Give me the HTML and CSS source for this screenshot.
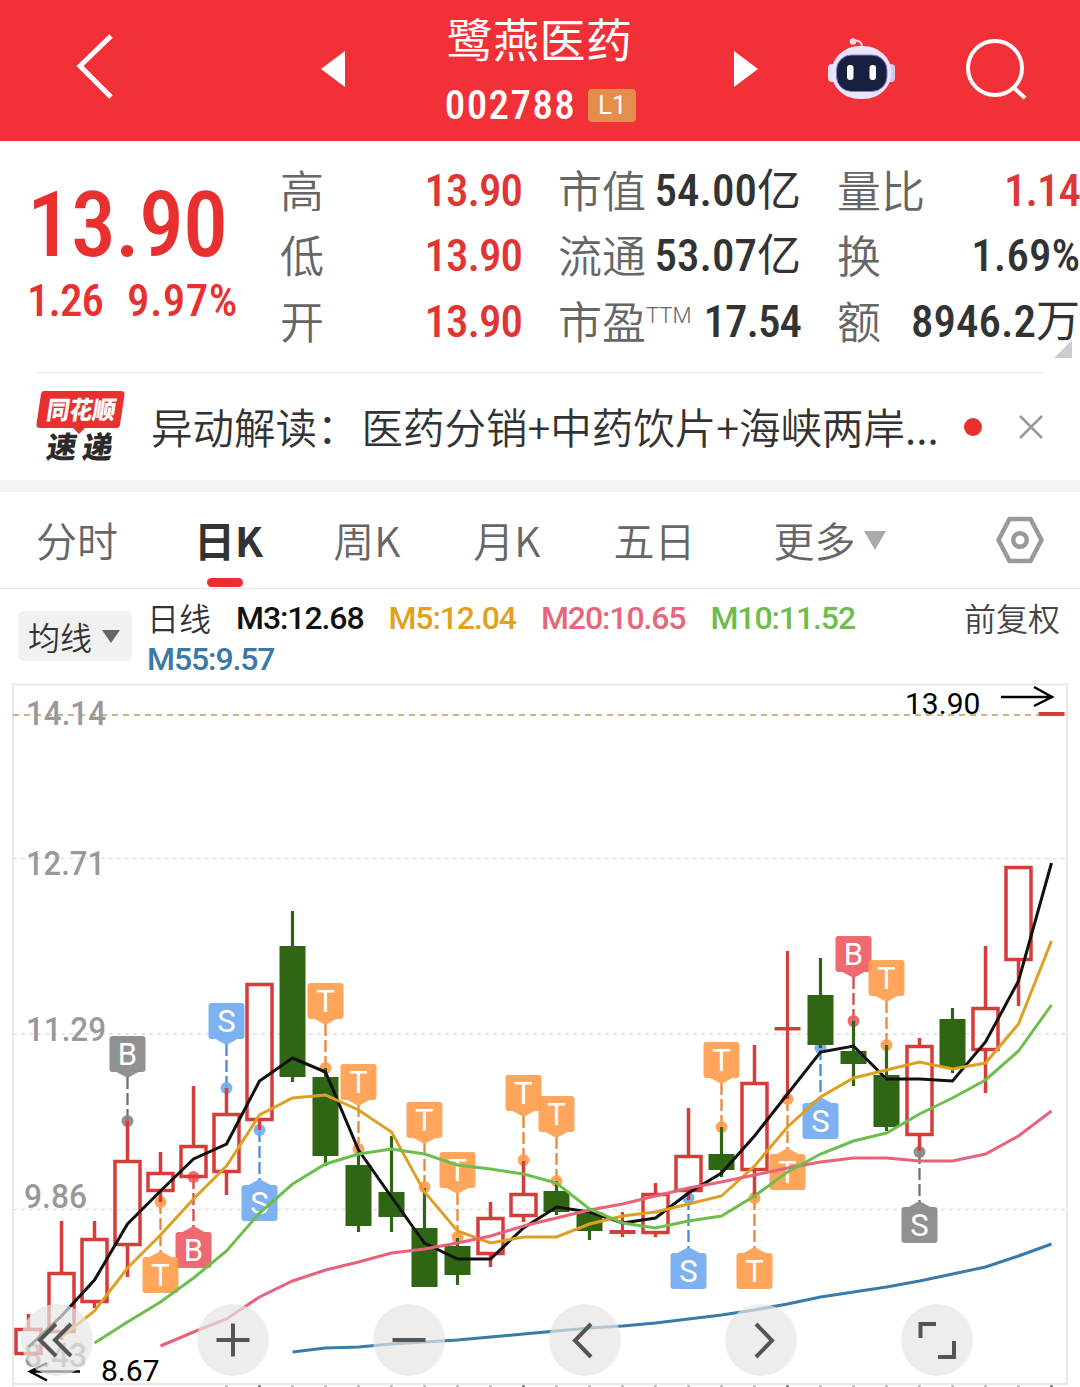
FILE: index.html
```
<!DOCTYPE html>
<html lang="zh-CN">
<head>
    <meta charset="UTF-8">
    <meta name="viewport" content="width=device-width, initial-scale=1.0">
    <title>鹭燕医药 002788</title>
    <link rel="stylesheet" href="styles.css">
</head>
<body>
    <header>
        <svg class="back" width="42" height="70" viewBox="0 0 42 70"><path d="M37 5 6 35l31 31" fill="none" stroke="#fff" stroke-width="5"/></svg>
        <svg class="prev" width="24" height="36" viewBox="0 0 24 36"><path d="M24 0v36L0 18z" fill="#fff"/></svg>
        <div class="title">
            <h1>鹭燕医药</h1>
            <div class="code"><span class="num">002788</span><span class="level">L1</span></div>
        </div>
        <svg class="next" width="24" height="36" viewBox="0 0 24 36"><path d="M0 0v36l24-18z" fill="#fff"/></svg>
        <svg class="robot" width="68" height="64" viewBox="0 0 68 64">
            <path d="M25 5c5-3 9 0 9 5" fill="none" stroke="#f3dcec" stroke-width="2"/>
            <circle cx="25" cy="4.500" r="3.300" fill="#f5d5e0"/>
            <rect x="0" y="27" width="8" height="18" rx="4" fill="#e4dff8"/>
            <rect x="59" y="27" width="8" height="18" rx="4" fill="#cfc8f2"/>
            <rect x="3.500" y="9" width="60" height="53" rx="28" fill="#e9e5f8"/>
            <rect x="8.500" y="18" width="50.500" height="36.500" rx="15" fill="#18203f" stroke="#8d72dd"/>
            <rect x="19" y="28" width="6.500" height="15" rx="3" fill="#fff"/>
            <rect x="41.500" y="28" width="6.500" height="15" rx="3" fill="#fff"/>
        </svg>
        <svg class="search" width="62" height="62" viewBox="0 0 62 62"><g fill="none" stroke="#fff" stroke-width="4"><circle cx="29" cy="30" r="27"/><path d="m47 49 12 11"/></g></svg>
    </header>

    <section class="quote">
        <div class="price">
            <div class="last num">13.90</div>
            <div class="change num"><span>1.26</span><span class="percent">9.97%</span></div>
        </div>
        <div class="stats">
            <div class="stat"><span>高</span><b class="red"><i class="num">13.90</i></b></div>
            <div class="stat"><span>市值</span><b><i class="num">54.00</i>亿</b></div>
            <div class="stat"><span>量比</span><b class="red"><i class="num">1.14</i></b></div>
            <div class="stat"><span>低</span><b class="red"><i class="num">13.90</i></b></div>
            <div class="stat"><span>流通</span><b><i class="num">53.07</i>亿</b></div>
            <div class="stat"><span>换</span><b><i class="num">1.69%</i></b></div>
            <div class="stat"><span>开</span><b class="red"><i class="num">13.90</i></b></div>
            <div class="stat"><span>市盈<sup>TTM</sup></span><b class="pe"><i class="num">17.54</i></b></div>
            <div class="stat"><span>额</span><b><i class="num">8946.2</i>万</b></div>
        </div>
        <div class="corner"></div>
    </section>

    <section class="news">
        <svg class="news-logo" width="90" height="80" viewBox="0 -3 90 80">
            <path d="M8 1h77q4 0 3.500 4l-4.500 30q-.5 3-4 3H49l-6 6-6-6H4q-4 0-3.500-4L5 4q.5-3 3-3z" fill="#e83030"/>
            <g transform="skewX(-9)" font-weight="900">
                <text x="14" y="28.500" font-size="25" fill="#fff" textLength="69" lengthAdjust="spacingAndGlyphs">同花顺</text>
                <text x="20" y="68" font-size="30" fill="#2b2b2b" textLength="66" lengthAdjust="spacing">速递</text>
            </g>
        </svg>
        <div class="news-text">异动解读：<span>医药分销+中药饮片+海峡两岸...</span></div>
        <div class="dot"></div>
        <svg width="26" height="26" viewBox="0 0 26 26"><path d="m2 2 22 22M24 2 2 24" stroke="#999" stroke-width="2.500"/></svg>
    </section>

    <nav>
        <span>分时</span>
        <span class="active">日K</span>
        <span>周K</span>
        <span>月K</span>
        <span>五日</span>
        <span>更多</span>
        <svg class="more" width="22" height="19" viewBox="0 0 22 19"><path d="M0 0h22L11 19z" fill="#aaa"/></svg>
        <svg class="setting" width="48" height="48" viewBox="0 0 48 48"><g fill="none" stroke="#999" stroke-width="4.500" stroke-linejoin="round"><path d="M13.500 3h21L45.500 24l-11 21h-21L2.500 24z"/><circle cx="24" cy="24" r="6.800"/></g></svg>
    </nav>

    <section class="legend">
        <div class="ma-btn">均线<svg width="18" height="13" viewBox="0 0 18 13"><path d="M0 0h18L9 13z" fill="#666"/></svg></div>
        <div class="ma-list">
            <span class="day">日线</span>
            <span class="num ma3">M3:12.68</span>
            <span class="num ma5">M5:12.04</span>
            <span class="num ma20">M20:10.65</span>
            <span class="num ma10">M10:11.52</span>
            <span class="num ma55">M55:9.57</span>
        </div>
        <div class="adjust">前复权</div>
    </section>

    <section class="chart">
        <svg id="kline" width="1080" height="704" viewBox="0 683 1080 704"></svg>
        <div class="tools">
            <button><svg viewBox="0 0 72 72"><path d="M35 20 19 36l16 16M50 20 34 36l16 16"/></svg></button>
            <button><svg viewBox="0 0 72 72"><path d="M36 19.500v33M19.500 36h33"/></svg></button>
            <button><svg viewBox="0 0 72 72"><path d="M19.500 36h33"/></svg></button>
            <button><svg viewBox="0 0 72 72"><path d="M42 20 26 36.500 42 53"/></svg></button>
            <button><svg viewBox="0 0 72 72"><path d="M31 20l16 16.500L31 53"/></svg></button>
            <button><svg viewBox="0 0 72 72"><path d="M19.500 34V20H35M53 37v16H37"/></svg></button>
        </div>
    </section>
    <script src="chart.js"></script>
</body>
</html>
```
FILE: styles.css
```
*{
    box-sizing: border-box;
}
html, body{
    margin: 0;
    padding: 0;
    width: 1080px;
    height: 1387px;
    overflow: hidden;
    background-color: white;
    color: #333;
    font-family: "Noto Sans CJK SC", sans-serif;
}
svg{
    display: block;
    flex: none;
}
.num{
    font-family: Roboto, sans-serif;
    font-weight: 500;
    font-stretch: 75%;
    font-style: normal;
}
.red{
    color: #e03535;
}

header{
    height: 141px;
    background-color: #f23038;
    color: white;
    display: flex;
    align-items: flex-start;
}
.back{
    margin: 31px 0 0 74px;
}
.prev{
    margin: 51px 0 0 205px;
}
.title{
    width: 389px;
    text-align: center;
}
h1{
    margin: 5px 0 0;
    font-size: 46px;
    line-height: 64px;
    font-weight: 400;
    letter-spacing: 0.5px;
}
.code{
    display: flex;
    justify-content: center;
    align-items: center;
    height: 64px;
    padding: 8px 0 0 2px;
    font-size: 41px;
    letter-spacing: 1.4px;
}
.level{
    width: 48px;
    height: 33px;
    margin-left: 12px;
    border-radius: 4px;
    background-color: #e58d4b;
    font: 26px/33px Roboto, sans-serif;
    letter-spacing: 0;
}
.next{
    margin-top: 51px;
}
.robot{
    margin: 37px 0 0 70px;
}
.search{
    margin: 38px 0 0 70px;
}

.quote{
    position: relative;
    height: 231px;
    display: flex;
}
.price{
    width: 280px;
    padding: 32px 0 0 27px;
    color: #e83030;
}
.last{
    font-size: 90px;
    line-height: 106px;
    letter-spacing: -1px;
}
.change{
    display: flex;
    gap: 24px;
    font-size: 45px;
    line-height: 44px;
    letter-spacing: -1px;
}
.percent{
    letter-spacing: 0.4px;
}
.stats{
    display: grid;
    grid-template-columns: 242px 243px 243px;
    grid-auto-rows: 65.5px;
    column-gap: 36px;
    padding-top: 15px;
}
.stat{
    display: flex;
    justify-content: space-between;
    align-items: center;
    white-space: nowrap;
    font-size: 44px;
    line-height: 64px;
}
.stat span{
    color: #666;
    font-weight: 350;
}
.stat b{
    font-weight: 400;
}
.stat .num{
    font-size: 45px;
}
.stat .red, .pe{
    letter-spacing: -1px;
}
sup{
    font: 300 22px/24px Roboto, sans-serif;
    vertical-align: 16px;
}
.corner{
    position: absolute;
    right: 8px;
    bottom: 14px;
    border-left: 18px solid transparent;
    border-bottom: 18px solid #ccc;
}

.news{
    height: 108px;
    margin: 0 36px;
    border-top: 1px solid #e8e8e8;
    display: flex;
    align-items: center;
}
.news-logo{
    margin-right: 25px;
}
.news-text{
    width: 816px;
    padding-bottom: 2px;
    font-size: 41.5px;
    font-weight: 350;
    white-space: nowrap;
}
.news-text span{
    margin-left: 3px;
}
.dot{
    width: 18px;
    height: 18px;
    margin-right: 36px;
    border-radius: 50%;
    background-color: #e83030;
}

nav{
    height: 109px;
    border-top: 12px solid #f4f4f4;
    border-bottom: 1px solid #e6e6e6;
    display: flex;
    align-items: center;
    font-size: 41px;
    color: #666;
    padding-left: 36px;
    font-weight: 350;
}
nav span{
    position: relative;
    top: -1px;
    margin-right: 73px;
}
nav .active{
    margin-left: 3px;
    margin-right: 70px;
    color: #333;
    font-weight: 600;
}
.active::after{
    content: "";
    position: absolute;
    left: 13px;
    bottom: -18px;
    width: 36px;
    height: 9px;
    border-radius: 5px;
    background-color: #e83030;
}
nav span:nth-child(6){
    margin-left: 5px;
}
.more{
    margin-left: -65px;
}
.setting{
    margin-left: 110px;
}

.legend{
    height: 94px;
    display: flex;
    font-size: 32px;
    font-weight: 350;
    padding-left: 18px;
}
.ma-btn{
    width: 114px;
    height: 50px;
    margin: 22px 15px 0 0;
    padding-left: 10px;
    border-radius: 6px;
    background-color: #f1f1f1;
    display: flex;
    align-items: center;
    gap: 10px;
}
.ma-list{
    width: 817px;
    padding-top: 9px;
    display: flex;
    flex-wrap: wrap;
    align-content: flex-start;
    column-gap: 25px;
    line-height: 41px;
}
.ma-list .num{
    font-stretch: 100%;
    letter-spacing: -1.1px;
}
.day{
    margin-top: -1px;
    height: 41px;
}
.ma3{ color: #111; }
.ma5{ color: #e0a020; }
.ma20{ color: #e8657a; }
.ma10{ color: #6dbd4b; margin-right: 50px; }
.ma55{ color: #3a78a5; }
.adjust{
    padding-top: 5px;
    line-height: 46px;
    color: #444;
}

.chart{
    position: relative;
    height: 704px;
}
.chart text{
    font-family: Roboto, sans-serif;
}
.scale{
    fill: #999;
    font-size: 33px;
    font-weight: 500;
}
.tools{
    position: absolute;
    left: 21px;
    bottom: 11px;
    display: flex;
    gap: 104px;
}
button{
    width: 72px;
    height: 72px;
    padding: 0;
    border: none;
    border-radius: 50%;
    background-color: rgba(229, 229, 229, 0.7);
}
button path{
    fill: none;
    stroke: #555;
    stroke-width: 4;
}
```
FILE: chart.js
```
const STEP = 33;
const FIRST = 28.5;
const RED = '#d63c3a';
const GREEN = '#306613';
const x = i => FIRST + i * STEP;

// r/g, high, body top, body bottom, low
const candles = [
    ['r', 1314, 1328, 1355, 1355], ['r', 1221, 1272, 1333, 1340], ['r', 1221, 1238, 1303, 1308],
    ['r', 1121, 1160, 1246, 1277], ['r', 1152, 1172, 1192, 1202], ['r', 1086, 1145, 1178, 1178],
    ['r', 1088, 1113, 1173, 1195], ['r', 983, 983, 1121, 1130], ['g', 911, 946, 1077, 1082],
    ['g', 1068, 1077, 1156, 1166], ['g', 1152, 1165, 1226, 1232], ['g', 1136, 1192, 1217, 1232],
    ['g', 1188, 1228, 1287, 1287], ['g', 1238, 1246, 1275, 1285], ['r', 1202, 1217, 1255, 1267],
    ['r', 1161, 1193, 1217, 1222], ['g', 1181, 1191, 1212, 1215], ['g', 1212, 1212, 1231, 1240],
    ['r', 1212, 1230, 1234, 1237], ['r', 1183, 1193, 1234, 1237], ['r', 1108, 1155, 1192, 1200],
    ['g', 1127, 1154, 1170, 1177], ['r', 1045, 1082, 1171, 1198], ['r', 951, 1027, 1030.5, 1099],
    ['g', 958, 995, 1045, 1048], ['g', 1021, 1051, 1064, 1086], ['g', 1045, 1075, 1127, 1131],
    ['r', 1038, 1045, 1136, 1151], ['g', 1008, 1019, 1068, 1073], ['r', 946, 1007, 1051, 1093],
    ['r', 866, 866, 961, 1006], ['r', 712, 712, 716, 716]
];

const lines = [
    { color: '#397ba9', from: 8, y: [1352, 1348, 1347, 1344, 1342, 1340, 1337, 1334, 1331, 1328, 1326, 1323, 1319, 1315, 1310, 1304, 1297, 1292, 1287, 1281, 1274, 1267, 1256, 1244] },
    { color: '#111', from: 0, y: [1347, 1316, 1280, 1224, 1191, 1159, 1144, 1081, 1058, 1072, 1150, 1197, 1243, 1259, 1259, 1228, 1207, 1212, 1223, 1218, 1193, 1173, 1136, 1094, 1052, 1046, 1079, 1079, 1081, 1042, 981, 863] },
    { color: '#dda022', from: 1, y: [1337, 1311, 1268, 1235, 1199, 1166, 1115, 1098, 1095, 1110, 1132, 1192, 1231, 1243, 1237, 1237, 1224, 1216, 1212, 1204, 1196, 1166, 1127, 1097, 1078, 1070, 1062, 1069, 1063, 1024, 941] },
    { color: '#e8637a', from: 4, y: [1346, 1332, 1319, 1297, 1281, 1270, 1262, 1253, 1249, 1243, 1236, 1226, 1218, 1210, 1204, 1196, 1188, 1182, 1175, 1168, 1162, 1158, 1158, 1161, 1161, 1154, 1136, 1111] },
    { color: '#6dbe4c', from: 2, y: [1343, 1322, 1302, 1278, 1251, 1213, 1184, 1164, 1154, 1149, 1154, 1165, 1169, 1174, 1183, 1209, 1223, 1228, 1221, 1216, 1196, 1172, 1154, 1141, 1133, 1114, 1098, 1080, 1051, 1005] }
];

const palette = {
    orange: ['#ff9c4a', '#e8873a'],
    blue: ['#70a9f0', '#4a8ad8'],
    red: ['#ec5a60', '#d94444'],
    gray: ['#858585', '#707070']
};
// candle, letter, color, point y, side (1 = under the candle)
const marks = [
    [3, 'B', 'gray', 1121, 0], [6, 'S', 'blue', 1088, 0], [9, 'T', 'orange', 1068, 0],
    [10, 'T', 'orange', 1149, 0], [12, 'T', 'orange', 1187, 0], [13, 'T', 'orange', 1237, 0],
    [15, 'T', 'orange', 1160, 0], [16, 'T', 'orange', 1181, 0], [21, 'T', 'orange', 1127, 0],
    [25, 'B', 'red', 1021, 0], [26, 'T', 'orange', 1045, 0], [5, 'B', 'red', 1177, 1],
    [4, 'T', 'orange', 1202, 1], [7, 'S', 'blue', 1130, 1], [20, 'S', 'blue', 1198, 1],
    [22, 'T', 'orange', 1198, 1], [23, 'T', 'orange', 1099, 1], [24, 'S', 'blue', 1048, 1],
    [27, 'S', 'gray', 1152, 1]
];

let out = '';

// frame, grid and price scale
out += '<path d="M13 1387V684.500H1067V1384H13" fill="none" stroke="#e8e8e8" stroke-width="2"/>';
[858.5, 1034, 1209.5].forEach(y => {
    out += `<path d="M13 ${y}H1066" stroke="#e0e0e0" stroke-width="1.300" stroke-dasharray="4 4"/>`;
});
out += '<path d="M13 715H1038" stroke="#c79a56" stroke-width="1.500" stroke-dasharray="6 5"/>';
[['14.14', 26, 725, 80], ['12.71', 26, 875, 79], ['11.29', 26, 1041, 80], ['9.86', 24, 1208, 63], ['8.43', 24, 1367, 63]].forEach(l => {
    out += `<text class="scale" x="${l[1]}" y="${l[2]}" textLength="${l[3]}" lengthAdjust="spacingAndGlyphs">${l[0]}</text>`;
});
for (let i = 6; i < 32; i++) {
    out += `<path d="M${x(i)} 1385v2" stroke="${(i + 1) % 8 ? '#bbb' : '#777'}" stroke-width="2.500"/>`;
}

marks.forEach(([i, letter, color, y, under]) => {
    const [fill, dark] = palette[color];
    const cx = x(i);
    const top = under ? y + 55 : y - 85;
    const tip = under ? `M${cx - 11} ${top}l11 -6 11 6z` : `M${cx - 11} ${top + 36}l11 6 11 -6z`;
    const dash = under ? `M${cx} ${y}V${top - 5}` : `M${cx} ${top + 41}V${y}`;
    out += `<path d="${dash}" stroke="${dark}" stroke-width="2.300" stroke-dasharray="12 4"/>
        <g fill="${fill}" fill-opacity="0.9"><circle cx="${cx}" cy="${y}" r="6"/>
        <path d="${tip}"/><rect x="${cx - 18}" y="${top}" width="36" height="36" rx="3"/></g>
        <text x="${cx}" y="${top + 29}" font-size="31" text-anchor="middle" fill="#fff">${letter}</text>`;
});

candles.forEach(([type, high, top, bottom, low], i) => {
    const cx = x(i);
    const flat = bottom - top < 5;
    if (type == 'g' || flat) {
        const c = type == 'g' ? GREEN : RED;
        out += `<path d="M${cx} ${high}V${low}" stroke="${c}" stroke-width="3.200"/>
            <rect x="${cx - 13}" y="${top}" width="26" height="${bottom - top}" fill="${c}"/>`;
    } else {
        out += `<path d="M${cx} ${high}V${top}M${cx} ${bottom}V${low}" stroke="${RED}" stroke-width="3.500"/>
            <rect x="${cx - 12.5}" y="${top + 1.5}" width="25" height="${bottom - top - 3}" fill="none" stroke="${RED}" stroke-width="3.500"/>`;
    }
});

lines.forEach(l => {
    const pts = l.y.map((y, n) => x(l.from + n) + ',' + y).join(' ');
    out += `<polyline points="${pts}" fill="none" stroke="${l.color}" stroke-width="3"/>`;
});

// highest and lowest price
out += `<text x="905" y="714" font-size="30">13.90</text>
    <text x="101" y="1381" font-size="30">8.67</text>
    <path d="M1001 697h50M1034 687l18 10-18 9M80 1371.500H30M47 1363l-17 8.500 17 9" fill="none" stroke="#000" stroke-width="2.500"/>`;

document.getElementById('kline').innerHTML = out;
```
